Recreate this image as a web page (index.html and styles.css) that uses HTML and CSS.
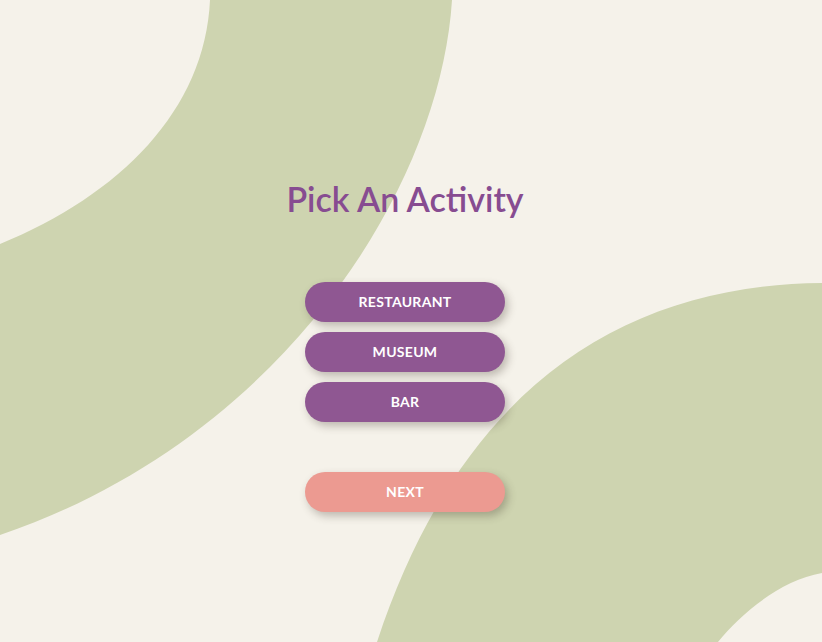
FILE: index.html
```html
<!DOCTYPE html>
<html lang="en">
<head>
<meta charset="utf-8">
<title>Pick An Activity</title>
<link rel="stylesheet" href="styles.css">
</head>
<body>
<svg class="bg" width="822" height="642" viewBox="0 0 822 642" aria-hidden="true">
  <path d="M210,0 L452,0 C440,190 280,440 0,535 L0,244 C120,195 205,110 210,0 Z" fill="#ced4b0"/>
  <path d="M822,283 C620,285 460,390 377,642 L718,642 C740,615 780,580 822,573 Z" fill="#ced4b0"/>
</svg>
<main class="page">
  <h1 class="title">Pick An Activity</h1>
  <div class="choices">
    <button class="pill pill-choice">RESTAURANT</button>
    <button class="pill pill-choice">MUSEUM</button>
    <button class="pill pill-choice">BAR</button>
  </div>
  <button class="pill pill-next">NEXT</button>
</main>
</body>
</html>
```
FILE: styles.css
```css
html, body {
  margin: 0;
  padding: 0;
}
body {
  width: 822px;
  height: 642px;
  overflow: hidden;
  background: #f5f2ea;
  font-family: "Lato", "Open Sans", sans-serif;
  position: relative;
}
.bg {
  position: absolute;
  left: 0;
  top: 0;
  display: block;
}
.page {
  position: relative;
  display: flex;
  flex-direction: column;
  align-items: center;
  width: 810px;
  padding-top: 178px;
}
.title {
  margin: 0;
  font-size: 34px;
  line-height: 42px;
  font-weight: 600;
  color: #874c91;
}
.choices {
  display: flex;
  flex-direction: column;
  gap: 10px;
  margin-top: 62px;
}
.pill {
  width: 200px;
  height: 40px;
  border: none;
  border-radius: 20px;
  color: #ffffff;
  font-family: "Lato", "Open Sans", sans-serif;
  font-size: 14px;
  font-weight: 700;
  letter-spacing: 0.3px;
  box-shadow: 3px 4px 8px rgba(60, 50, 40, 0.3);
  padding: 0 0 2px 0;
}
.pill-choice {
  background: #8f5792;
}
.pill-next {
  margin-top: 50px;
  background: #ec9a91;
}
```
